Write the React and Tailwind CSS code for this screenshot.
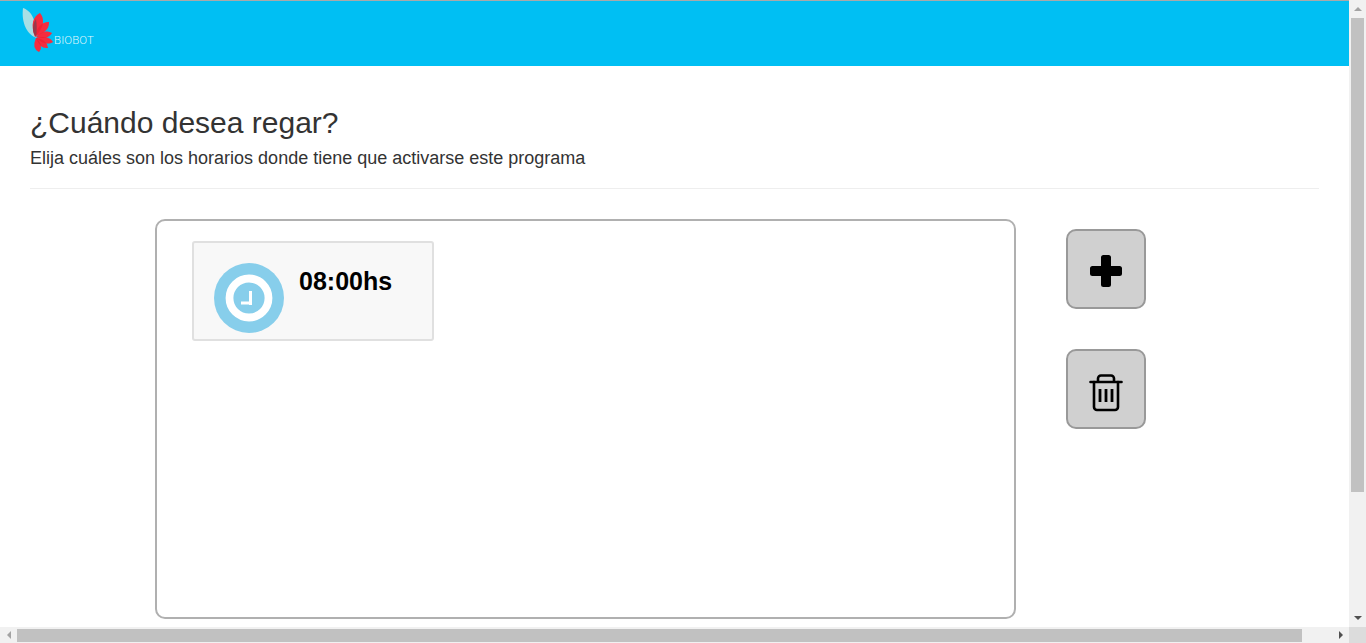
const petals = [
  [35, 37, 40, 13, 10],
  [35, 36, 49, 22, 7.500],
  [36, 37, 52, 33, 6],
  [36, 38, 53, 42, 6],
  [36, 38, 48, 48, 6],
  [36, 38, 39, 52, 6.500],
];

function petalPath([x1, y1, x2, y2, w]) {
  const dx = x2 - x1;
  const dy = y2 - y1;
  const len = Math.hypot(dx, dy);
  const nx = (-dy / len) * w;
  const ny = (dx / len) * w;
  const mx = x1 + dx * 0.65;
  const my = y1 + dy * 0.65;
  return `M${x1} ${y1}Q${mx + nx} ${my + ny} ${x2} ${y2}Q${mx - nx} ${my - ny} ${x1} ${y1}Z`;
}

function Logo() {
  return (
    <div className="flex items-end">
      <svg width="36" height="48" viewBox="20 6 36 48" className="block">
        <path d="M23 8C31 11 36 18 36.500 38C28 35 21 24 23 8Z" fill="#a8dfe5" />
        {petals.map((p, i) => (
          <path key={i} d={petalPath(p)} fill="#fb3f50" />
        ))}
        {petals.map((p, i) => (
          <path key={i} d={petalPath(p)} fill="#ee1226" fillOpacity="0.4" />
        ))}
        <path d="M36 19C37 25 37 31 36 37C32.500 33 31.500 26 36 19Z" fill="#9a3a4a" />
      </svg>
      <span className="ml-[-2px] mb-[7px] font-['Roboto',sans-serif] text-[11.500px] leading-[13px] font-light tracking-[0.1px] text-[#dff5fc]">
        BIOBOT
      </span>
    </div>
  );
}

function ClockBadge() {
  return (
    <svg width="70" height="70" viewBox="0 0 70 70" className="block shrink-0">
      <circle cx="35" cy="35" r="35" fill="#87ceeb" />
      <circle cx="35" cy="35" r="19.500" fill="none" stroke="#fff" strokeWidth="7.800" />
      <rect x="35" y="28" width="3" height="14" fill="#fff" />
      <rect x="27" y="38.500" width="11" height="3" fill="#fff" />
    </svg>
  );
}

function Plus() {
  return (
    <svg width="34" height="34" viewBox="0 0 34 34">
      <path d="M14.500 1h5a2.500 2.500 0 0 1 2.500 2.500V12h8.500a2.500 2.500 0 0 1 2.500 2.500v5a2.500 2.500 0 0 1-2.500 2.500H22v8.500a2.500 2.500 0 0 1-2.500 2.500h-5a2.500 2.500 0 0 1-2.500-2.500V22H3.500A2.500 2.500 0 0 1 1 19.500v-5A2.500 2.500 0 0 1 3.500 12H12V3.500A2.500 2.500 0 0 1 14.500 1Z" fill="#000" />
    </svg>
  );
}

function Trash() {
  return (
    <svg width="34" height="38" viewBox="0 0 34 38" fill="none" stroke="#000" strokeWidth="2.600" strokeLinecap="round" strokeLinejoin="round">
      <path d="M1.500 8h31" />
      <path d="M9 7.500V4.500A3 3 0 0 1 12 1.500h10a3 3 0 0 1 3 3v3" />
      <path d="M5 8v25a3 3 0 0 0 3 3h18a3 3 0 0 0 3-3V8" />
      <path d="M11 15v13M17 15v13M23 15v13" strokeWidth="2.800" strokeLinecap="butt" />
    </svg>
  );
}

function Arrow({ dir }) {
  const cls = {
    up: "border-x-[4px] border-b-[4px] border-x-transparent border-b-[#a3a3a3]",
    down: "border-x-[4px] border-t-[4px] border-x-transparent border-t-[#505050]",
    left: "border-y-[4px] border-r-[4px] border-y-transparent border-r-[#a3a3a3]",
    right: "border-y-[4px] border-l-[4px] border-y-transparent border-l-[#505050]",
  }[dir];
  return <div className={`h-0 w-0 ${cls}`} />;
}

export default function App() {
  return (
    <div className="flex h-[643px] w-[1366px] flex-col overflow-hidden bg-white font-['Liberation_Sans',Arial,sans-serif] text-[#333]">
      <div className="flex min-h-0 flex-1">
        <div className="flex min-w-0 flex-1 flex-col overflow-hidden">
          <div className="h-px shrink-0 bg-[#a9a9a9]" />
          <header className="h-[65px] shrink-0 bg-[#00bff3] pl-[20px] pt-[5px]">
            <Logo />
          </header>
          <main className="px-[30px]">
            <h1 className="mt-[39px] text-[30px] leading-[36px] font-normal">¿Cuándo desea regar?</h1>
            <p className="mt-[8px] text-[18px] leading-[18px]">
              Elija cuáles son los horarios donde tiene que activarse este programa
            </p>
            <hr className="mt-[21px] border-0 border-t border-[#eee]" />
            <div className="mt-[30px] flex items-start">
              <div className="ml-[125px] h-[400px] w-[861px] shrink-0 rounded-[10px] border-2 border-[#b0b0b0] pl-[35px] pt-[20px]">
                <div className="flex h-[100px] w-[242px] rounded-[3px] border-2 border-[#e0e0e0] bg-[#f8f8f8] pl-[20px] pt-[20px]">
                  <ClockBadge />
                  <span className="ml-[15px] text-[25px] leading-[36px] font-bold text-black">08:00hs</span>
                </div>
              </div>
              <div className="ml-[50px] flex flex-col gap-[40px] pt-[10px]">
                <button className="flex h-[80px] w-[80px] items-center justify-center rounded-[10px] border-2 border-[#999] bg-[#d0d0d0] pt-[3px]">
                  <Plus />
                </button>
                <button className="flex h-[80px] w-[80px] items-center justify-center rounded-[10px] border-2 border-[#999] bg-[#d0d0d0] pt-[8px]">
                  <Trash />
                </button>
              </div>
            </div>
          </main>
        </div>
        <div className="flex w-[17px] shrink-0 flex-col items-center bg-[#f1f1f1]">
          <div className="flex h-[18px] items-center justify-center"><Arrow dir="up" /></div>
          <div className="h-[474px] w-[13px] bg-[#c1c1c1]" />
          <div className="flex-1" />
          <div className="flex h-[18px] items-center justify-center"><Arrow dir="down" /></div>
        </div>
      </div>
      <div className="flex h-[16px] shrink-0 items-center bg-[#f1f1f1]">
        <div className="flex w-[17px] justify-center"><Arrow dir="left" /></div>
        <div className="h-[13px] w-[1285px] bg-[#c1c1c1]" />
        <div className="flex-1" />
        <div className="flex w-[17px] justify-center"><Arrow dir="right" /></div>
        <div className="h-[16px] w-[17px] bg-[#dcdcdc]" />
      </div>
    </div>
  );
}
